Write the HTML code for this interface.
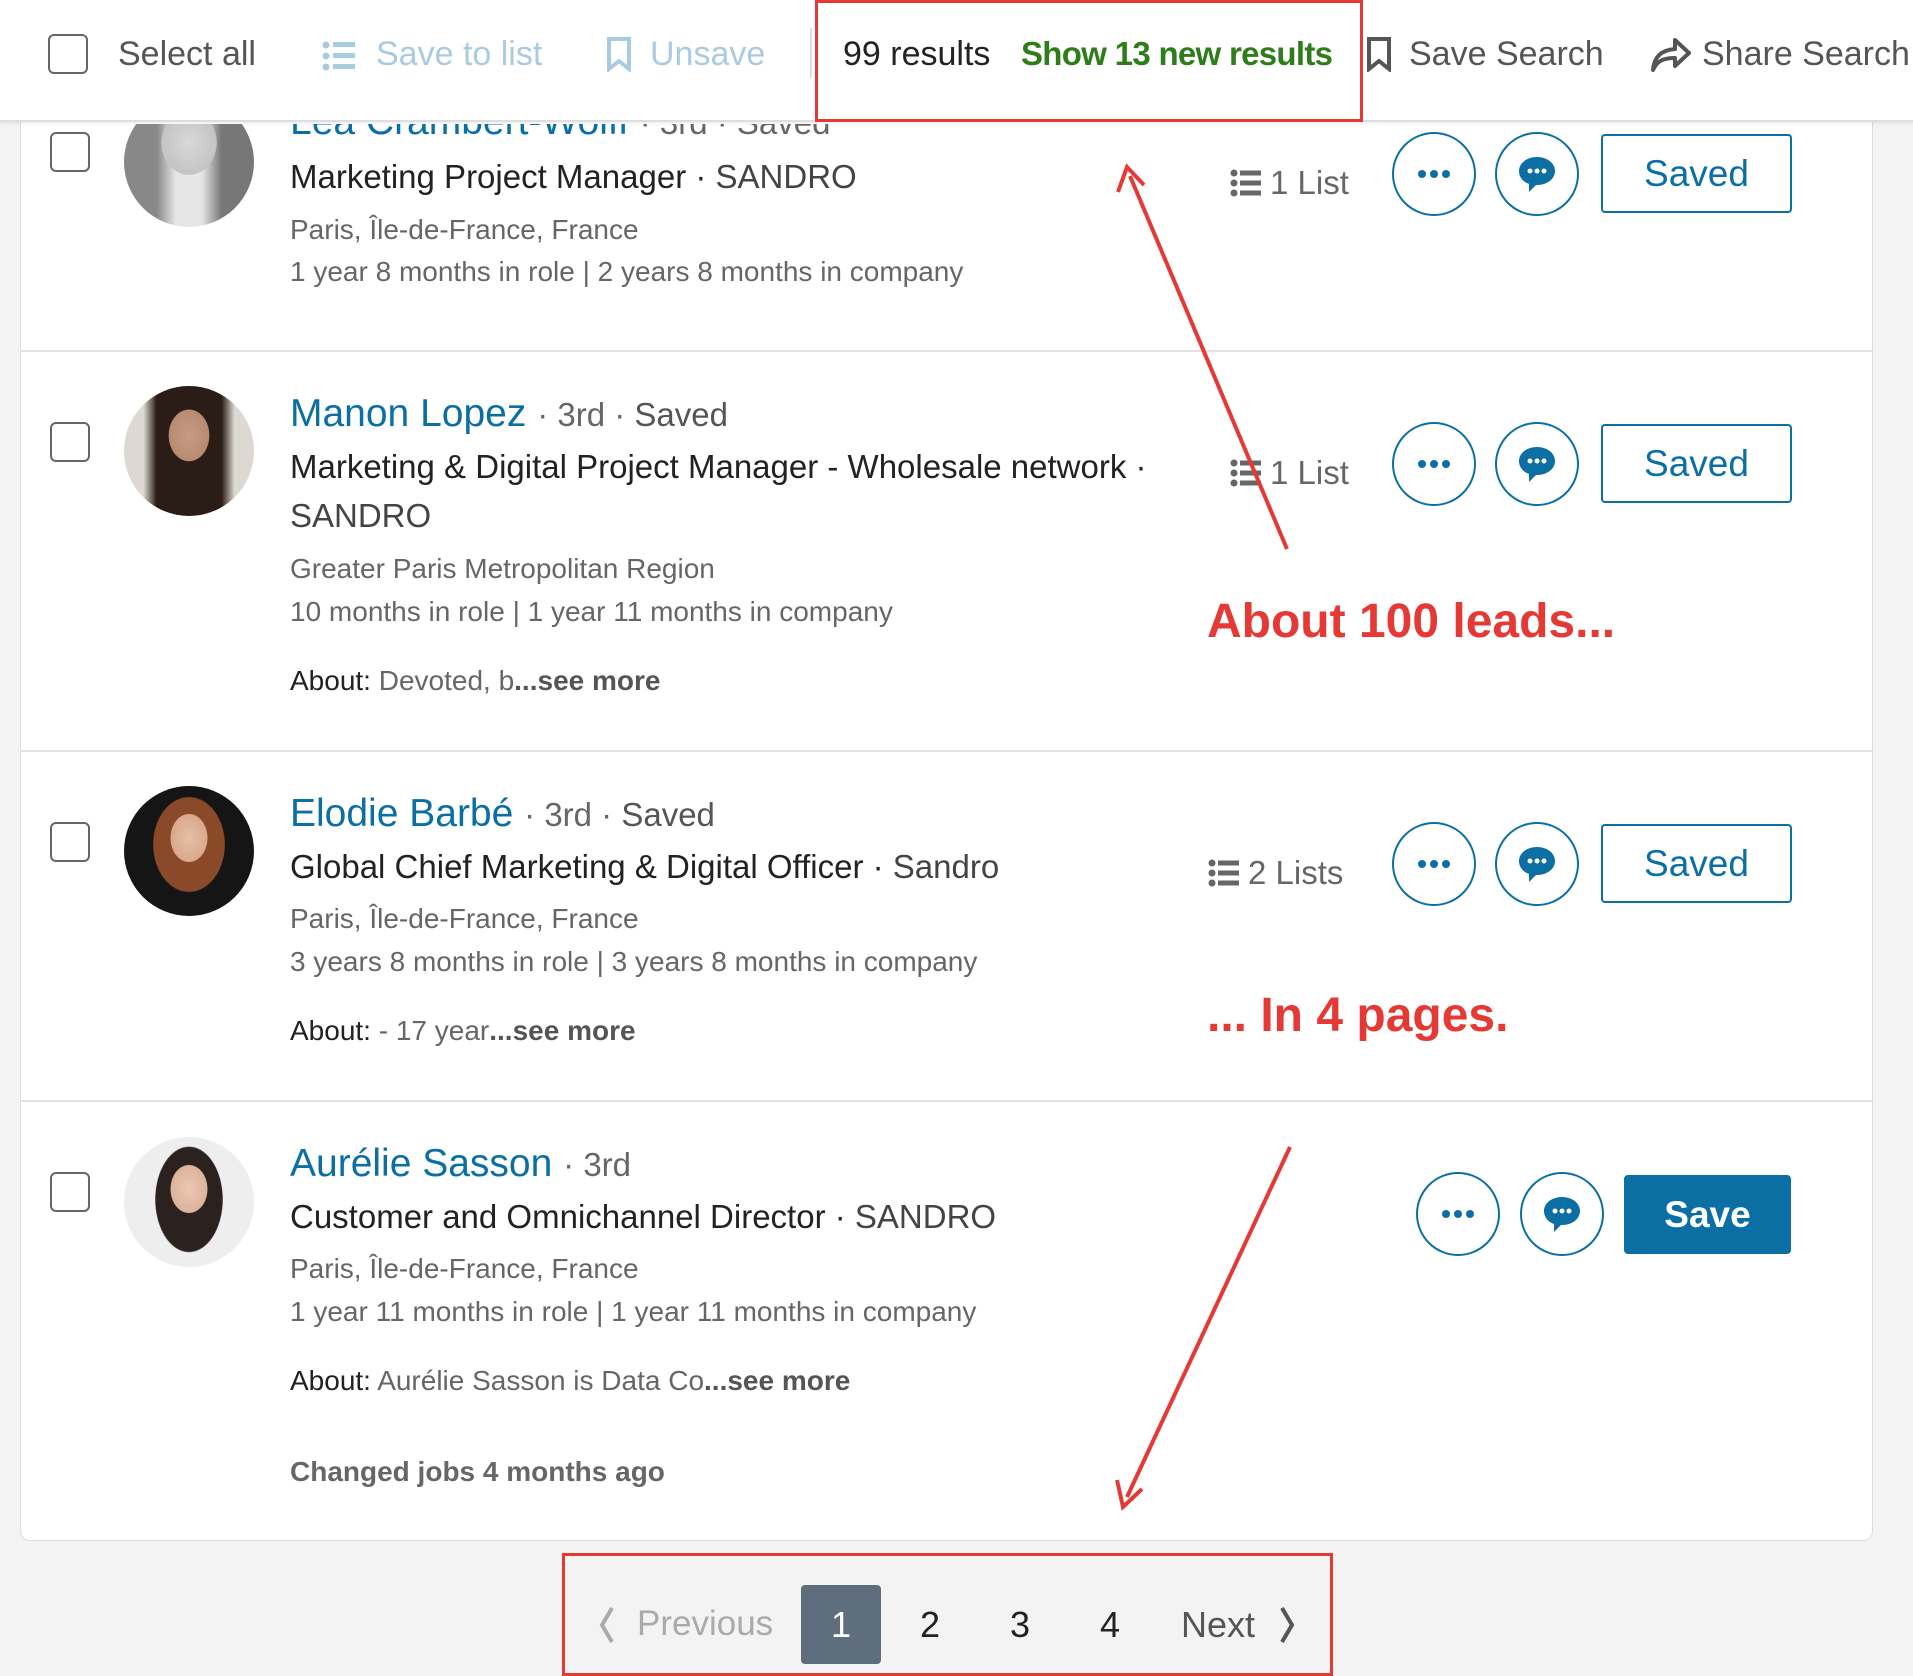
<!DOCTYPE html>
<html><head><meta charset="utf-8"><style>
*{margin:0;padding:0;box-sizing:border-box}
body{width:1913px;height:1676px;background:#f3f3f3;font-family:"Liberation Sans",sans-serif;position:relative;overflow:hidden}
.a{position:absolute;white-space:nowrap}
.card{position:absolute;left:20px;top:100px;width:1853px;height:1441px;background:#fff;border:1px solid #ddd;border-radius:0 0 10px 10px}
.sep{position:absolute;left:20px;width:1853px;height:2px;background:#e3e3e3}
.cb{position:absolute;width:40px;height:40px;border:2px solid #666;border-radius:6px;background:#fff}
.av{position:absolute;width:130px;height:130px;border-radius:50%}
.name{font-size:39px;color:#0b6fa4}
.deg{font-size:33px;color:#666}
.title{font-size:33px;color:#222}
.loc{font-size:28px;color:#666}
.ab{font-size:28px;color:#222}
.ab span{color:#666}
.ab b{color:#555;font-weight:bold}
.circ{position:absolute;width:84px;height:84px;border:2px solid #0b6fa4;border-radius:50%;display:flex;align-items:center;justify-content:center}
.btn{position:absolute;width:191px;height:79px;border:2px solid #0b6fa4;border-radius:4px;color:#0b6fa4;font-size:37px;display:flex;align-items:center;justify-content:center}
.lst{font-size:33px;color:#666;display:flex;align-items:center;gap:8px}
.red{color:#e53935;font-weight:bold;font-size:48px}
</style></head><body>
<div class="card"></div>
<div class="sep" style="top:350px"></div>
<div class="sep" style="top:750px"></div>
<div class="sep" style="top:1100px"></div>

<!-- header -->
<div class="a" style="left:0;top:0;width:1913px;height:122px;background:#fff;border-bottom:2px solid #ddd;box-shadow:0 2px 3px rgba(0,0,0,.06)"></div>
<div class="cb" style="left:48px;top:34px"></div>
<div class="a" style="left:118px;top:35px;font-size:34px;color:#555">Select all</div>
<svg class="a" style="left:322px;top:40px" width="34" height="32"><g fill="#a9cbe0"><circle cx="4" cy="5" r="3.5"/><circle cx="4" cy="16" r="3.5"/><circle cx="4" cy="27" r="3.5"/><rect x="11" y="2" width="22" height="5"/><rect x="11" y="13" width="22" height="5"/><rect x="11" y="24" width="22" height="5"/></g></svg>
<div class="a" style="left:376px;top:35px;font-size:34px;color:#a9cbe0">Save to list</div>
<svg class="a" style="left:606px;top:36px" width="26" height="36"><path d="M3 3h20v30l-10-8-10 8z" fill="none" stroke="#a9cbe0" stroke-width="4"/></svg>
<div class="a" style="left:650px;top:35px;font-size:34px;color:#a9cbe0">Unsave</div>
<div class="a" style="left:810px;top:28px;width:2px;height:50px;background:#ddd"></div>
<div class="a" style="left:815px;top:0;width:548px;height:122px;border:3px solid #e53935"></div>
<div class="a" style="left:843px;top:35px;font-size:34px;color:#222">99 results</div>
<div class="a" style="left:1021px;top:35px;font-size:33px;color:#2e7d1a;font-weight:bold;letter-spacing:-0.7px">Show 13 new results</div>
<svg class="a" style="left:1366px;top:36px" width="26" height="36"><path d="M3 3h20v30l-10-8-10 8z" fill="none" stroke="#555" stroke-width="4"/></svg>
<div class="a" style="left:1409px;top:35px;font-size:34px;color:#555">Save Search</div>
<svg class="a" style="left:1651px;top:38px" width="40" height="34"><path d="M24 2l14 13-14 13v-8c-12 0-18 3-22 12 1-13 8-20 22-21z" fill="none" stroke="#555" stroke-width="4" stroke-linejoin="round"/></svg>
<div class="a" style="left:1702px;top:35px;font-size:34px;color:#555">Share Search</div>

<!-- row 1 (clipped name) -->
<div style="position:absolute;left:0;top:124px;width:1913px;height:226px;overflow:hidden">
<div class="a name" style="left:290px;top:-24px">Lea Crambert-Wolff <span class="deg">· 3rd · Saved</span></div>
<div class="cb" style="left:50px;top:8px"></div>
<div class="av" style="left:124px;top:-27px;background:radial-gradient(ellipse 30% 35% at 50% 35%,#d8d8d8,#c4c4c4 70%,transparent 72%),linear-gradient(90deg,#888 0 25%,#e6e6e6 40% 60%,#777 75%)"></div>
</div>
<div class="a title" style="left:290px;top:158px">Marketing Project Manager · <span style="color:#444">SANDRO</span></div>
<div class="a loc" style="left:290px;top:214px">Paris, Île-de-France, France</div>
<div class="a loc" style="left:290px;top:256px">1 year 8 months in role | 2 years 8 months in company</div>

<!-- row 2 -->
<div class="cb" style="left:50px;top:422px"></div>
<div class="av" style="left:124px;top:386px;background:radial-gradient(ellipse 22% 28% at 50% 38%,#c99a82,#b88a72 70%,transparent 72%),linear-gradient(90deg,#ddd8d2 0 15%,#2a1c16 25% 75%,#ddd8d2 85%)"></div>
<div class="a name" style="left:290px;top:392px">Manon Lopez <span class="deg">· 3rd · <span style="color:#555">Saved</span></span></div>
<div class="a title" style="left:290px;top:448px">Marketing &amp; Digital Project Manager - Wholesale network ·</div>
<div class="a title" style="left:290px;top:497px;color:#444">SANDRO</div>
<div class="a loc" style="left:290px;top:553px">Greater Paris Metropolitan Region</div>
<div class="a loc" style="left:290px;top:596px">10 months in role | 1 year 11 months in company</div>
<div class="a ab" style="left:290px;top:665px">About: <span>Devoted, b</span><b>...see more</b></div>

<!-- row 3 -->
<div class="cb" style="left:50px;top:822px"></div>
<div class="av" style="left:124px;top:786px;background:radial-gradient(ellipse 20% 26% at 50% 40%,#e6bfa6,#d9a98c 70%,transparent 72%),radial-gradient(ellipse 34% 45% at 50% 45%,#8a4a2a 80%,transparent 82%),#151515"></div>
<div class="a name" style="left:290px;top:792px">Elodie Barbé <span class="deg">· 3rd · <span style="color:#555">Saved</span></span></div>
<div class="a title" style="left:290px;top:848px">Global Chief Marketing &amp; Digital Officer · <span style="color:#444">Sandro</span></div>
<div class="a loc" style="left:290px;top:903px">Paris, Île-de-France, France</div>
<div class="a loc" style="left:290px;top:946px">3 years 8 months in role | 3 years 8 months in company</div>
<div class="a ab" style="left:290px;top:1015px">About: <span>- 17 year</span><b>...see more</b></div>

<!-- row 4 -->
<div class="cb" style="left:50px;top:1172px"></div>
<div class="av" style="left:124px;top:1137px;background:radial-gradient(ellipse 20% 26% at 50% 40%,#ecc8b4,#dcb29a 70%,transparent 72%),radial-gradient(ellipse 32% 50% at 50% 48%,#2b2220 80%,transparent 82%),#eeeeee"></div>
<div class="a name" style="left:290px;top:1142px">Aurélie Sasson <span class="deg">· 3rd</span></div>
<div class="a title" style="left:290px;top:1198px">Customer and Omnichannel Director · <span style="color:#444">SANDRO</span></div>
<div class="a loc" style="left:290px;top:1253px">Paris, Île-de-France, France</div>
<div class="a loc" style="left:290px;top:1296px">1 year 11 months in role | 1 year 11 months in company</div>
<div class="a ab" style="left:290px;top:1365px">About: <span>Aurélie Sasson is Data Co</span><b>...see more</b></div>
<div class="a ab" style="left:290px;top:1456px"><b style="color:#666">Changed jobs 4 months ago</b></div>

<!-- right side actions -->
<div class="a lst" style="left:1230px;top:164px"><svg width="32" height="28"><g fill="#666"><circle cx="4" cy="4" r="3.5"/><circle cx="4" cy="14" r="3.5"/><circle cx="4" cy="24" r="3.5"/><rect x="10" y="1.5" width="21" height="5"/><rect x="10" y="11.5" width="21" height="5"/><rect x="10" y="21.5" width="21" height="5"/></g></svg>1 List</div>
<div class="a lst" style="left:1230px;top:454px"><svg width="32" height="28"><g fill="#666"><circle cx="4" cy="4" r="3.5"/><circle cx="4" cy="14" r="3.5"/><circle cx="4" cy="24" r="3.5"/><rect x="10" y="1.5" width="21" height="5"/><rect x="10" y="11.5" width="21" height="5"/><rect x="10" y="21.5" width="21" height="5"/></g></svg>1 List</div>
<div class="a lst" style="left:1208px;top:854px"><svg width="32" height="28"><g fill="#666"><circle cx="4" cy="4" r="3.5"/><circle cx="4" cy="14" r="3.5"/><circle cx="4" cy="24" r="3.5"/><rect x="10" y="1.5" width="21" height="5"/><rect x="10" y="11.5" width="21" height="5"/><rect x="10" y="21.5" width="21" height="5"/></g></svg>2 Lists</div>

<!-- buttons rows 1-3 -->
<div class="circ" style="left:1392px;top:132px"><svg width="34" height="10"><g fill="#0b6fa4"><circle cx="5" cy="5" r="4"/><circle cx="17" cy="5" r="4"/><circle cx="29" cy="5" r="4"/></g></svg></div>
<div class="circ" style="left:1495px;top:132px"><svg width="42" height="40"><path d="M21 3c10 0 18 6 18 14s-8 14-18 14h-1l-7 7v-8C7 28 3 23 3 17 3 9 11 3 21 3z" fill="#0b6fa4"/><g fill="#fff"><circle cx="14" cy="17" r="2.5"/><circle cx="21" cy="17" r="2.5"/><circle cx="28" cy="17" r="2.5"/></g></svg></div>
<div class="btn" style="left:1601px;top:134px">Saved</div>

<div class="circ" style="left:1392px;top:422px"><svg width="34" height="10"><g fill="#0b6fa4"><circle cx="5" cy="5" r="4"/><circle cx="17" cy="5" r="4"/><circle cx="29" cy="5" r="4"/></g></svg></div>
<div class="circ" style="left:1495px;top:422px"><svg width="42" height="40"><path d="M21 3c10 0 18 6 18 14s-8 14-18 14h-1l-7 7v-8C7 28 3 23 3 17 3 9 11 3 21 3z" fill="#0b6fa4"/><g fill="#fff"><circle cx="14" cy="17" r="2.5"/><circle cx="21" cy="17" r="2.5"/><circle cx="28" cy="17" r="2.5"/></g></svg></div>
<div class="btn" style="left:1601px;top:424px">Saved</div>

<div class="circ" style="left:1392px;top:822px"><svg width="34" height="10"><g fill="#0b6fa4"><circle cx="5" cy="5" r="4"/><circle cx="17" cy="5" r="4"/><circle cx="29" cy="5" r="4"/></g></svg></div>
<div class="circ" style="left:1495px;top:822px"><svg width="42" height="40"><path d="M21 3c10 0 18 6 18 14s-8 14-18 14h-1l-7 7v-8C7 28 3 23 3 17 3 9 11 3 21 3z" fill="#0b6fa4"/><g fill="#fff"><circle cx="14" cy="17" r="2.5"/><circle cx="21" cy="17" r="2.5"/><circle cx="28" cy="17" r="2.5"/></g></svg></div>
<div class="btn" style="left:1601px;top:824px">Saved</div>

<div class="circ" style="left:1416px;top:1172px"><svg width="34" height="10"><g fill="#0b6fa4"><circle cx="5" cy="5" r="4"/><circle cx="17" cy="5" r="4"/><circle cx="29" cy="5" r="4"/></g></svg></div>
<div class="circ" style="left:1520px;top:1172px"><svg width="42" height="40"><path d="M21 3c10 0 18 6 18 14s-8 14-18 14h-1l-7 7v-8C7 28 3 23 3 17 3 9 11 3 21 3z" fill="#0b6fa4"/><g fill="#fff"><circle cx="14" cy="17" r="2.5"/><circle cx="21" cy="17" r="2.5"/><circle cx="28" cy="17" r="2.5"/></g></svg></div>
<div class="btn" style="left:1624px;top:1175px;width:167px;background:#0b6fa4;color:#fff;font-weight:bold">Save</div>

<!-- annotations -->
<div class="a red" style="left:1207px;top:594px">About 100 leads...</div>
<div class="a red" style="left:1207px;top:988px">... In 4 pages.</div>
<svg class="a" style="left:0;top:0" width="1913" height="1676">
<g stroke="#e53935" stroke-width="4" fill="none">
<line x1="1287" y1="549" x2="1130" y2="176"/>
<path d="M1118 192 L1127 167 L1144 185" />
<line x1="1290" y1="1147" x2="1127" y2="1497"/>
<path d="M1117 1480 L1123 1507 L1142 1489"/>
</g>
<path d="M612 1608 L602 1625 L612 1642" stroke="#aaa" stroke-width="4" fill="none"/>
<path d="M1282 1608 L1292 1625 L1282 1642" stroke="#555" stroke-width="4" fill="none"/>
</svg>

<!-- pagination -->
<div class="a" style="left:562px;top:1553px;width:771px;height:123px;border:3px solid #e53935"></div>
<div class="a" style="left:637px;top:1604px;font-size:35px;color:#aaa">Previous</div>
<div class="a" style="left:801px;top:1585px;width:80px;height:79px;background:#5e6e7c;border-radius:4px;color:#fff;font-size:36px;display:flex;align-items:center;justify-content:center">1</div>
<div class="a" style="left:920px;top:1604px;font-size:36px;color:#222">2</div>
<div class="a" style="left:1010px;top:1604px;font-size:36px;color:#222">3</div>
<div class="a" style="left:1100px;top:1604px;font-size:36px;color:#222">4</div>
<div class="a" style="left:1181px;top:1604px;font-size:36px;color:#555">Next</div>
</body></html>
